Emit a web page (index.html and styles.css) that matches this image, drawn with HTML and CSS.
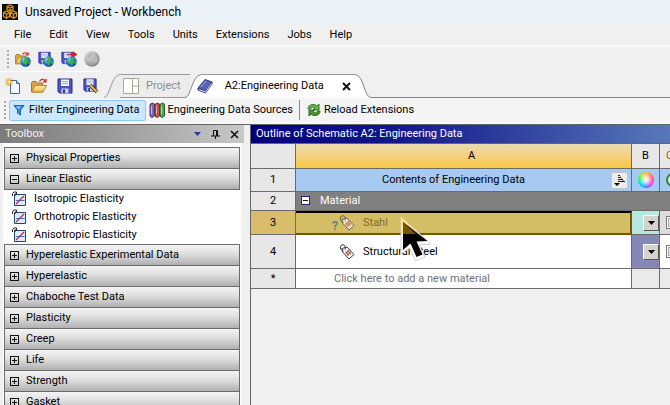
FILE: index.html
```html
<!DOCTYPE html>
<html lang="en">
<head>
<meta charset="utf-8">
<title>Unsaved Project - Workbench</title>
<link rel="stylesheet" href="styles.css">
</head>
<body>
<svg class="defs" aria-hidden="true">
  <defs>
    <linearGradient id="fold" x1="0" y1="0" x2="0" y2="1"><stop offset="0" stop-color="#fff0a8"/><stop offset="1" stop-color="#e9b44c"/></linearGradient>
    <radialGradient id="sea" cx=".35" cy=".3" r=".75"><stop offset="0" stop-color="#8ed8ff"/><stop offset=".6" stop-color="#1976d0"/><stop offset="1" stop-color="#083b8f"/></radialGradient>
    <radialGradient id="moon" cx=".35" cy=".3" r=".75"><stop offset="0" stop-color="#e4e4e4"/><stop offset="1" stop-color="#858585"/></radialGradient>
    <symbol id="globe" viewBox="0 0 12 12"><circle cx="6" cy="6" r="5.7" fill="url(#sea)"/><path d="M5 .6 9 1.500 8 4 6.500 5 8 7 6.500 11 5 8.500 4 6 5 3z M1 3 3 3.500 2.500 6 .6 6z" fill="#45b32e"/><path d="M9 5l2.500 1-1 3-1.500-1z" fill="#45b32e"/></symbol>
    <symbol id="folder" viewBox="0 0 16 16"><path d="M.5 14V4.500l1-1H5l1 1.500h5.500V14z" fill="#d9a441" stroke="#a87718"/><path d="M.8 14 4 7.500h11.500L12 14z" fill="url(#fold)" stroke="#b98a26"/><path d="M8.500 3.500C10 .8 12.500.8 14 2.800M15 .8v3h-3" fill="none" stroke="#c5242c" stroke-width="1.300"/></symbol>
    <symbol id="disk" viewBox="0 0 16 16"><path d="M1 1h14v14H2.500L1 13.500z" fill="#4b55c4" stroke="#262f8f"/><path d="M4 1.500h8V8H4z" fill="#f4f7ff"/><path d="M5 3.500h6M5 5.500h6" stroke="#9ca8d8"/><path d="M4.500 10.500h7V15h-7z" fill="#c7cde9"/><path d="M6 11.500h2V15H6z" fill="#2c347e"/></symbol>
    <symbol id="prop" viewBox="0 0 16 16"><path d="M3.500 3.500h11v11h-11z" fill="#dcebfa" stroke="#23456d"/><path d="M5 9.500h8.500" stroke="#3477c4"/><path d="M5 13 8 10 10 8 13 5" fill="none" stroke="#e02020" stroke-width="1.300"/><path d="M1.500 5V2.500L3 1h2.500v2H4v2" fill="none" stroke="#222"/></symbol>
    <symbol id="tag" viewBox="0 0 16 16"><path d="M3 4.500 8 3l7 7.500-5 4.500L3.500 8z" fill="#fff" stroke="#303850"/><path d="M4.500 7C1 6 .2 2 3 1s4 2 3 4.500" fill="none" stroke="#222"/><path d="m6.500 7.500 3 4M8.500 6l3.200 4.500M6.500 9.500l4-3M8 11.500l4-3" stroke="#b65a4a" stroke-width="1.200"/></symbol>
    <symbol id="drop" viewBox="0 0 7 4"><path d="M0 0h7L3.500 4z" fill="currentColor"/></symbol>
  </defs>
</svg>

<header class="titlebar">
  <svg class="logo" viewBox="0 0 16 16"><path d="M0 0h16v16H0z" fill="#100b04"/><path d="m8 1 3 1.500v3L8 7 5 5.500v-3zM4.500 7l3 1.500v4l-3 1.700-3-1.700v-4zM11.500 7l3 1.500v4l-3 1.700-3-1.700v-4zM5 2.500 8 4l3-1.500M8 4v3M1.500 8.500l3 1.700 3-1.700M4.500 10v4M8.500 8.500l3 1.700 3-1.700M11.500 10v4" fill="none" stroke="#e29a20" stroke-width="1.200"/></svg>
  <span>Unsaved Project - Workbench</span>
</header>

<nav class="menubar">
  <a href="#">File</a><a href="#">Edit</a><a href="#">View</a><a href="#">Tools</a><a href="#">Units</a><a href="#">Extensions</a><a href="#">Jobs</a><a href="#">Help</a>
</nav>

<div class="toolbar web">
  <span class="grip"></span>
  <button aria-label="Open from web"><svg viewBox="0 0 16 16"><use href="#folder" width="14" height="15"/><use href="#globe" x="5" y="5" width="11" height="11"/></svg></button>
  <button aria-label="Save to web"><svg viewBox="0 0 16 16"><use href="#disk" width="13" height="14"/><use href="#globe" x="5" y="5" width="11" height="11"/></svg></button>
  <button aria-label="Send to web"><svg viewBox="0 0 16 16"><use href="#disk" width="13" height="14"/><path d="M6 3.500h8M12 1l3 2.500L12 6" fill="none" stroke="#d3202c" stroke-width="1.600"/><use href="#globe" x="5" y="5" width="11" height="11"/></svg></button>
  <button aria-label="Web status" disabled><svg viewBox="0 0 16 16"><circle cx="8" cy="8" r="7.700" fill="url(#moon)"/><path d="m4 3 4-1 1 3-3 3-3-1zM10 6l4 1-1 4-3 1-2-3z" fill="#b9b9b9"/></svg></button>
</div>

<div class="tabrow">
  <div class="files">
    <button aria-label="New"><svg viewBox="0 0 16 16"><path d="M5.500 2.500h6l3 3v10h-9z" fill="#f3f8ff" stroke="#47649c"/><path d="M11.500 2.500v3h3" fill="#bdd0ee" stroke="#47649c"/><path d="M4 0v8M0 4h8M1 1l6 6M7 1 1 7" stroke="#eda524" stroke-width="1.200"/><circle cx="4" cy="4" r="1.500" fill="#fff3a0"/></svg></button>
    <button aria-label="Open"><svg viewBox="0 0 16 16"><use href="#folder"/></svg></button>
    <button aria-label="Save"><svg viewBox="0 0 16 16"><use href="#disk"/></svg></button>
    <button aria-label="Save as"><svg viewBox="0 0 16 16"><use href="#disk" width="14" height="14"/><path d="m7 7 7 7" stroke="#333" stroke-width="3.500"/><path d="m7 7 7 7" stroke="#efb84a" stroke-width="2"/></svg></button>
  </div>
  <div class="tabs" role="tablist">
    <button class="tab" role="tab">
      <svg class="edge" viewBox="0 0 16 24"><path d="M0 24C6 24 8 1 16 .5V24z" fill="#ececec"/><path d="M0 23.500C6 23.500 7 1 16 .5" fill="none" stroke="#999"/></svg>
      <span class="face"><svg class="icon" viewBox="0 0 16 16"><path d="M.5.500h15v15H.5zM9.500.500v15M9.500 8h6" fill="#fff" stroke="#aaa58f"/></svg>Project</span>
    </button>
    <button class="tab active" role="tab" aria-selected="true">
      <svg class="edge" viewBox="0 0 16 24"><path d="M0 24C6 24 7 1 16 0V24z" fill="#fff"/><path d="M0 23.500C6 23.500 7 1 16 .5" fill="none" stroke="#888"/></svg>
      <span class="face"><svg class="icon" viewBox="0 0 16 16"><path d="m1 10 7-8.500 7 2.500-6.500 9z" fill="#5962b7" stroke="#303a82"/><path d="m1 10 7.500 3L15 4v2l-6.500 9L1 12z" fill="#6a72c0" stroke="#303a82"/><path d="m2 11.500 6.500 2.500L14.500 5.500" fill="none" stroke="#d8dcef"/><path d="m4 9 5-6" stroke="#9aa3e0"/></svg>A2:Engineering Data<svg class="close" viewBox="0 0 9 9"><path d="m1 1 7 7M8 1 1 8" stroke="#111" stroke-width="2"/></svg></span>
      <svg class="edge" viewBox="0 0 16 24"><path d="M0 0C8 1 9 24 16 24H0z" fill="#fff"/><path d="M0 .5C9 1 9 23.500 16 23.500" fill="none" stroke="#888"/></svg>
    </button>
    <span class="baseline"></span>
  </div>
</div>

<div class="toolbar actions">
  <span class="grip"></span>
  <button class="pressed"><svg viewBox="0 0 16 16"><path d="M3 3.500h10L9.500 8v5l-3-2V8z" fill="#3f8be0" stroke="#2460a8"/><path d="M5 4.500h5L7.500 7z" fill="#a9d4ff"/></svg>Filter Engineering Data</button>
  <button><svg viewBox="0 0 16 16"><path d="M1 2.500 3 1l2.500 1v12L3 15.500 1 14z" fill="#7c68b8" stroke="#44356f"/><path d="M6 2.500 8 1l2.500 1v12L8 15.500 6 14z" fill="#c6544d" stroke="#7d2621"/><path d="M11 2.500 13 1l2.500 1v12L13 15.500 11 14z" fill="#58a35b" stroke="#27622b"/><path d="M2.500 4v8M7.500 4v8M12.500 4v8" stroke="#fff8"/></svg>Engineering Data Sources</button>
  <span class="rule"></span>
  <button><svg viewBox="0 0 16 16"><path d="M2 7C2 2.500 8 1 11 4l2-2v6H7l2-2C7 4.500 5 5 4.500 7z" fill="#6bb544" stroke="#34752a"/><path d="M14 9c0 4.500-6 6-9 3l-2 2V8h6l-2 2c2 1.500 4 1 4.500-1z" fill="#4b9434" stroke="#2b6623"/></svg>Reload Extensions</button>
</div>

<main class="work">
  <section class="toolbox">
    <h2>Toolbox
      <span class="tools"><button aria-label="Menu"><svg class="caret" viewBox="0 0 7 4"><use href="#drop"/></svg></button><button aria-label="Pin"><svg class="glyph" viewBox="0 0 9 9"><path d="M2.500 6V.5h4V6M5.500 0v6M0 6h9M4.500 6v3" fill="none" stroke="#111"/></svg></button><button aria-label="Close"><svg class="glyph" viewBox="0 0 9 9"><path d="m1 1 7 7M8 1 1 8" stroke="#111" stroke-width="1.600"/></svg></button></span>
    </h2>
    <div class="groups">
      <button class="group"><i class="box plus"></i>Physical Properties</button>
      <button class="group"><i class="box"></i>Linear Elastic</button>
      <ul>
        <li><svg viewBox="0 0 16 16"><use href="#prop"/></svg>Isotropic Elasticity</li>
        <li><svg viewBox="0 0 16 16"><use href="#prop"/></svg>Orthotropic Elasticity</li>
        <li><svg viewBox="0 0 16 16"><use href="#prop"/></svg>Anisotropic Elasticity</li>
      </ul>
      <button class="group"><i class="box plus"></i>Hyperelastic Experimental Data</button>
      <button class="group"><i class="box plus"></i>Hyperelastic</button>
      <button class="group"><i class="box plus"></i>Chaboche Test Data</button>
      <button class="group"><i class="box plus"></i>Plasticity</button>
      <button class="group"><i class="box plus"></i>Creep</button>
      <button class="group"><i class="box plus"></i>Life</button>
      <button class="group"><i class="box plus"></i>Strength</button>
      <button class="group"><i class="box plus"></i>Gasket</button>
    </div>
  </section>

  <section class="outline">
    <h2>Outline of Schematic A2: Engineering Data</h2>
    <table>
      <colgroup><col class="c-num"><col><col class="c-color"><col class="c-flag"></colgroup>
      <thead>
        <tr class="letters"><th></th><th class="sel">A</th><th>B</th><th class="flag">C</th></tr>
      </thead>
      <tbody>
        <tr class="r1"><th>1</th><td><div class="contents"><span>Contents of Engineering Data</span><button class="sort" aria-label="Sort"><svg viewBox="0 0 12 12"><path d="M4 1.500h2M4 3.500h3M4 5.500h5M4 7.500h7" stroke="#222"/><path d="M6 2.500h1M7 4.500h1M8 6.500h2" stroke="#c98b55"/><path d="M0 9h6L3 12z" fill="#000"/></svg></button></div></td><td><i class="wheel"></i></td><td class="flag"><svg class="check" viewBox="0 0 14 14"><circle cx="7" cy="7" r="6" fill="#dff5dc" stroke="#2f8b32" stroke-width="2"/><path d="m4 3 6 4-6 4z" fill="#259a2b"/></svg></td></tr>
        <tr class="r2"><th>2</th><td colspan="3"><i class="box"></i>Material</td></tr>
        <tr class="r3"><th>3</th><td><span class="name"><b>?</b><svg viewBox="0 0 16 16"><use href="#tag"/></svg>Stahl</span></td><td class="teal"><label class="pick"><select aria-label="Color of Stahl"><option></option></select><svg viewBox="0 0 7 4"><use href="#drop"/></svg></label></td><td class="flag"><input type="checkbox" aria-label="Stahl flag"></td></tr>
        <tr class="r4"><th>4</th><td><span class="name"><b></b><svg viewBox="0 0 16 16"><use href="#tag"/></svg>Structural Steel</span></td><td class="violet"><label class="pick"><select aria-label="Color of Structural Steel"><option></option></select><svg viewBox="0 0 7 4"><use href="#drop"/></svg></label></td><td class="flag"><input type="checkbox" aria-label="Structural Steel flag"></td></tr>
        <tr class="r5"><th>*</th><td>Click here to add a new material</td><td></td><td></td></tr>
      </tbody>
    </table>
    <svg class="pointer" viewBox="0 0 34 46"><path d="M1 1v37l8.500-6 6 13 9.500-4-6-12 12-1z" fill="#fff" stroke="#d0d0d0"/><path d="M1 1v17h18z" fill="#ffe27a"/><path d="M3 6v28l7.500-6.500 6 13.500 6-2.500-6-13 11-.5z" fill="#000"/><path d="M3 6v12h13z" fill="#765600"/></svg>
  </section>
</main>
</body>
</html>
```
FILE: styles.css
```css
* { box-sizing: border-box; }
html, body { height: 100%; }
body {
  margin: 0;
  display: flex;
  flex-direction: column;
  overflow: hidden;
  background: #f0f0f0;
  color: #000;
  font: 11px/16px Roboto, "Liberation Sans", sans-serif;
  white-space: nowrap;
}
button { font: inherit; color: inherit; background: none; border: 0; padding: 0; margin: 0; }
svg { display: block; flex: none; }
a { color: inherit; text-decoration: none; }
h2 { margin: 0; font: inherit; }
.defs { position: absolute; width: 0; height: 0; }

.titlebar {
  display: flex;
  align-items: center;
  gap: 7px;
  height: 23px;
  padding-left: 2px;
  background: #ebf3f8;
  font-size: 12px;
  flex: none;
}
.logo { width: 16px; height: 16px; }

.menubar {
  display: flex;
  align-items: center;
  gap: 18px;
  height: 24px;
  padding: 2px 0 0 14px;
  border-bottom: 2px solid #fcfcfc;
  flex: none;
}

.toolbar { display: flex; align-items: center; flex: none; }
.toolbar svg, .files svg { width: 16px; height: 16px; }
.toolbar button { display: flex; align-items: center; }
.grip { width: 2px; height: 18px; flex: none; background: repeating-linear-gradient(#aaa 0 2px, transparent 2px 4px); }
.web { gap: 7px; height: 25px; padding-left: 7px; margin-right: auto; border-bottom: 1px solid #fff; }
.web .grip { margin-right: -1px; }

.tabrow { display: flex; height: 26px; align-items: flex-end; flex: none; }
.files { display: flex; gap: 10px; width: 104px; height: 24px; padding-left: 5px; align-items: center; flex: none; }
.tabs { display: flex; flex: 1; align-items: flex-end; }
.tab { display: flex; height: 24px; color: #8c8c8c; }
.edge { width: 16px; height: 24px; }
.face { display: flex; align-items: center; gap: 7px; height: 24px; border-top: 1px solid #999; background: #ececec; border-bottom: 1px solid #999; padding: 0 9px 0 3px; }
.icon { width: 16px; height: 16px; }
.active { margin-left: -5px; color: #000; }
.active .face { background: #fff; border-bottom-color: #fff; gap: 12px; padding: 0 4px 0 0; }
.active .icon { margin-left: -4px; }
.close { width: 9px; height: 9px; margin-left: 6px; }
.baseline { flex: 1; border-bottom: 1px solid #888; }

.actions { height: 26px; gap: 2px; padding-left: 4px; background: #f4f4f4; border-bottom: 2px solid #f8f8f8; }
.actions button { gap: 2px; height: 21px; padding: 0 1px; }
.actions .pressed { margin-left: 1px; padding: 0 6px 0 1px; background: #cce8ff; border: 1px solid #8ccaf3; border-radius: 2px; }
.rule { width: 1px; height: 20px; background: #888; margin: 0 3px; }

.work { display: flex; flex: 1; min-height: 0; border-top: 1px solid #666; }
.toolbox { display: flex; flex-direction: column; width: 249px; flex: none; overflow: hidden; }
.toolbox h2 { display: flex; justify-content: space-between; align-items: center; height: 18px; padding: 0 5px; margin-right: 5px; background: linear-gradient(90deg, #7c7c7c, #929292 35%, #c8c8c8); color: #f2f2f2; flex: none; }
.tools { display: flex; align-items: center; gap: 10px; color: #1e3c96; }
.caret { width: 7px; height: 4px; }
.glyph { width: 9px; height: 9px; }
.groups { flex: 1; margin: 0 8px 0 3px; padding: 4px 1px 0; background: #fff; }
.group {
  display: flex;
  align-items: center;
  gap: 7px;
  width: 100%;
  height: 21px;
  padding-left: 5px;
  border: solid #6c6c6c;
  border-width: 1px 1px 0;
  background: linear-gradient(#f4f4f4, #dedede 45%, #b0b0b0);
}
.groups ul { margin: 0; padding: 0; list-style: none; border-top: 1px solid #6c6c6c; }
.groups li { display: flex; align-items: center; gap: 7px; height: 18px; padding-left: 7px; }
.groups li svg { width: 16px; height: 16px; }
.box { width: 9px; height: 9px; flex: none; border: 1px solid #111; background: linear-gradient(#111, #111) center / 5px 1px no-repeat; }
.plus { background: linear-gradient(#111, #111) center / 5px 1px no-repeat, linear-gradient(#111, #111) center / 1px 5px no-repeat; }

.outline { position: relative; flex: 1; min-width: 0; margin-left: 1px; border-left: 1px solid #666; overflow: hidden; }
.outline h2 { height: 19px; padding: 1px 0 0 5px; color: #fff; background: linear-gradient(90deg, #00007c, #12188c 35%, #5878bb); border-bottom: 1px solid #666; }
table { width: calc(100% + 18px); table-layout: fixed; border-collapse: separate; border-spacing: 0; }
.c-num { width: 45px; }
.c-color { width: 28px; }
.c-flag { width: 28px; }
th, td { padding: 0; border: solid #6b6b6b; border-width: 0 1px 1px 0; font-weight: normal; text-align: center; vertical-align: middle; line-height: 14px; }
th { background: #e7e7e7; }
td { background: #fff; }
.letters { height: 25px; }
.letters .sel { padding-left: 16px; background: linear-gradient(#ecdcb1, #f2d17f 50%, #fbc742); }
.flag { text-align: left; padding-left: 6px; }
.letters .flag { color: #a05a20; }
.r1 { height: 23px; }
.r1 td { background: #a6caf2; }
.contents { display: flex; align-items: center; padding-right: 3px; }
.contents span { flex: 1; }
.sort { display: flex; align-items: center; justify-content: center; width: 17px; height: 17px; border: 1px solid #c5c5c5; border-radius: 2px; background: #ececec; }
.sort svg { width: 12px; height: 12px; }
.wheel { display: block; width: 16px; height: 16px; margin: 0 auto; border-radius: 50%; background: radial-gradient(#fff 5%, transparent 65%), conic-gradient(#fb3, #f66 15%, #f4a 25%, #e3e 36%, #66f 46%, #0bf 58%, #0dc 68%, #3e6 78%, #9e2 88%, #fb3); }
.check { width: 14px; height: 14px; }
.r2 { height: 19px; }
.r2 td { background: #808080; color: #fff; text-align: left; padding-left: 5px; }
.r2 .box { display: inline-block; margin-right: 10px; background-color: #fff; border-color: #2c2470; vertical-align: -1px; }
.r3 { height: 24px; }
.r3 th { background: #d9bc6c; }
.r3 td:nth-child(2) { background: #d4be65; border: 2px solid #765600; border-top-color: #000; border-left-width: 0; color: #806b22; }
.r3 .name svg { opacity: .65; }
.r3 .flag { background: #ddd; }
.r4 { height: 34px; }
.r5 { height: 20px; }
.r5 td { background: #eaeaea; }
.r5 td:nth-child(2) { background: #fff; color: #717171; text-align: left; padding-left: 38px; }
.name { display: flex; align-items: center; padding-left: 35px; }
.name b { width: 8px; color: #5e8580; font-size: 12px; align-self: flex-end; line-height: 10px; }
.name svg { width: 16px; height: 16px; margin-right: 8px; }
.teal { background: #b5e8e3; }
.violet { background: #8588b7; }
.pick { position: relative; display: block; width: 16px; height: 16px; margin-left: auto; }
.pick select { display: block; width: 16px; height: 16px; padding: 0; appearance: none; border: 1px solid; border-color: #fff #555 #555 #fff; border-radius: 0; background: #d6d3ce; }
.pick svg { position: absolute; left: 5px; top: 6px; width: 7px; height: 4px; pointer-events: none; }
input { display: block; appearance: none; width: 13px; height: 13px; margin: 0; border: 1px solid #777; background: #e6e6e6; box-shadow: inset 0 0 0 1px #fff, inset 0 0 0 2px #aaa; }
.pointer { position: absolute; left: 149px; top: 91px; width: 34px; height: 46px; }
```
